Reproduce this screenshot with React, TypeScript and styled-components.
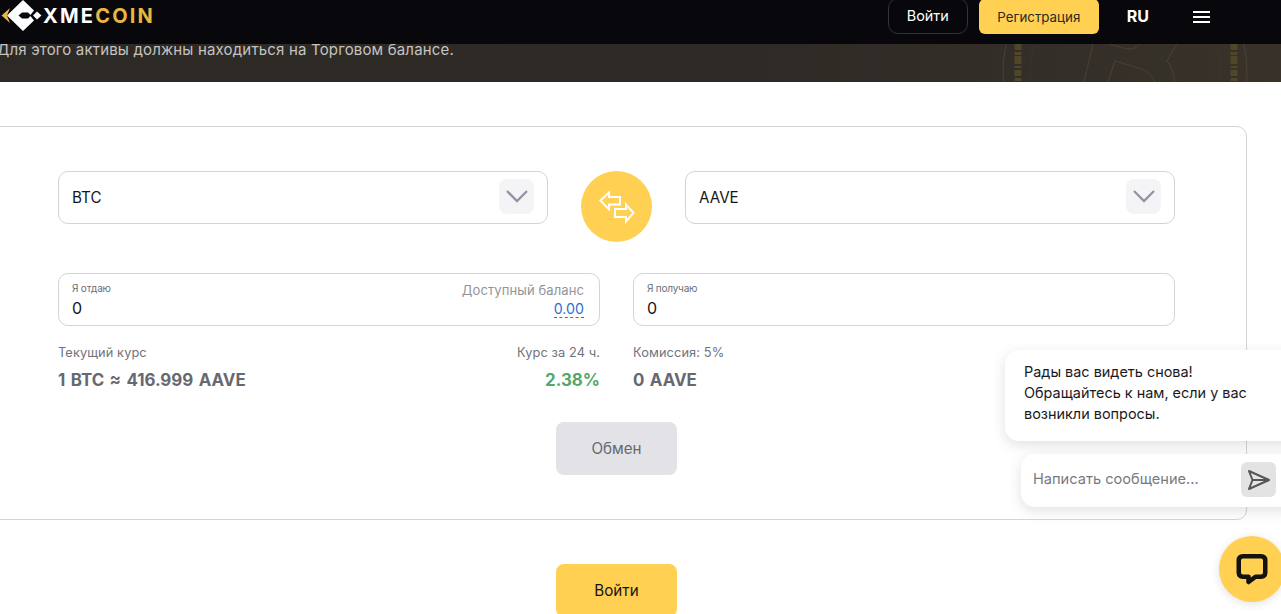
import React from "react";
import styled, { createGlobalStyle } from "styled-components";

const GlobalStyle = createGlobalStyle`
  html, body {
    margin: 0;
    padding: 0;
    background: #fff;
    overflow: hidden;
  }
  body {
    font-family: Inter, "Noto Sans", sans-serif;
    color: #14151a;
  }
  * {
    box-sizing: border-box;
  }
`;

const App: React.FC = () => {
  return (
    <>
      <GlobalStyle />
      <Page>
        <Header>
          <LogoLink>
            <svg width="43" height="32" viewBox="0 0 43 32">
              <path d="M1.5 15.5 L10 8 L7 15.5 L10 23 Z" fill="#e9b63f" />
              <path d="M7 15.5 L23 0 L34 10.5 L30 15.5 L34 20.5 L23 31 Z" fill="#fff" />
              <path d="M33 15.5 L37 11.5 L41.5 15.5 L37 19.5 Z" fill="#fff" />
              <path d="M18.5 15.5 L22 12.5 L28 12.5 L31 15.5 L28 18.5 L22 18.5 Z" fill="#07070c" />
            </svg>
            <LogoText>
              XME<LogoAccent>COIN</LogoAccent>
            </LogoText>
          </LogoLink>
          <HeaderActions>
            <LoginLink>Войти</LoginLink>
            <RegisterLink>Регистрация</RegisterLink>
            <Lang>RU</Lang>
            <Burger>
              <span />
              <span />
              <span />
            </Burger>
          </HeaderActions>
        </Header>

        <Hero>
          <HeroText>Для этого активы должны находиться на Торговом балансе.</HeroText>
          <HeroCoin width="300" height="38" viewBox="0 0 300 38">
            <g fill="none" stroke="#4a4231" strokeWidth="1">
              <circle cx="140" cy="28" r="122" />
              <circle cx="140" cy="28" r="95" strokeDasharray="1 2" />
              <path d="M108 0 L99 38 M130 17 L123 38 M130 17 L157 25 Q166 29 170 38 M182 17 L192 0 M182 17 Q188 24 190 38 M125 0 L142 5 Q150 6 155 0" />
            </g>
            <g stroke="#504729" strokeWidth="7" strokeDasharray="6 2 3 1 8 2 2 2">
              <path d="M33 0 V38" />
              <path d="M249 0 V38" />
            </g>
          </HeroCoin>
        </Hero>

        <Main>
          <ExchangeCard>
            <SelectRow>
              <SelectBox>
                <span>BTC</span>
                <Chevron>
                  <svg width="24" height="14" viewBox="0 0 24 14">
                    <path d="M2 2 L12 12 L22 2" fill="none" stroke="#9294a5" strokeWidth="2.4" />
                  </svg>
                </Chevron>
              </SelectBox>
              <SwapButton>
                <svg width="36" height="36" viewBox="0 0 36 36">
                  <g fill="none" stroke="#fff" strokeWidth="2" strokeLinejoin="miter">
                    <path d="M1.5 11.5 L10 3.5 V8 H21 V15.5 H10 V20.5 Z" />
                    <path d="M34.5 23.8 L27 15.5 V20 H16 V28 H27 V32.5 Z" />
                  </g>
                </svg>
              </SwapButton>
              <SelectBox>
                <span>AAVE</span>
                <Chevron>
                  <svg width="24" height="14" viewBox="0 0 24 14">
                    <path d="M2 2 L12 12 L22 2" fill="none" stroke="#9294a5" strokeWidth="2.4" />
                  </svg>
                </Chevron>
              </SelectBox>
            </SelectRow>

            <AmountRow>
              <AmountColumn>
                <AmountBox>
                  <div>
                    <AmountLabel>Я отдаю</AmountLabel>
                    <AmountValue>0</AmountValue>
                  </div>
                  <Balance>
                    <BalanceLabel>Доступный баланс</BalanceLabel>
                    <BalanceValue>0.00</BalanceValue>
                  </Balance>
                </AmountBox>
                <Stats>
                  <div>
                    <StatLabel>Текущий курс</StatLabel>
                    <StatValue>1 BTC ≈ 416.999 AAVE</StatValue>
                  </div>
                  <StatRight>
                    <StatLabel>Курс за 24 ч.</StatLabel>
                    <StatValue $positive>2.38%</StatValue>
                  </StatRight>
                </Stats>
              </AmountColumn>
              <AmountColumn>
                <AmountBox>
                  <div>
                    <AmountLabel>Я получаю</AmountLabel>
                    <AmountValue>0</AmountValue>
                  </div>
                </AmountBox>
                <Stats>
                  <div>
                    <StatLabel>Комиссия: 5%</StatLabel>
                    <StatValue>0 AAVE</StatValue>
                  </div>
                </Stats>
              </AmountColumn>
            </AmountRow>

            <ExchangeButton>Обмен</ExchangeButton>
          </ExchangeCard>

          <SubmitButton>Войти</SubmitButton>
        </Main>

        <ChatWidget>
          <ChatBubble>
            Рады вас видеть снова!
            <br />
            Обращайтесь к нам, если у вас
            <br />
            возникли вопросы.
          </ChatBubble>
          <ChatInput>
            <span>Написать сообщение...</span>
            <ChatSend>
              <svg width="24" height="22" viewBox="0 0 24 22">
                <path d="M2 2 L22 11 L2 20 L5.5 11 Z M5.5 11 H22" fill="none" stroke="#555" strokeWidth="2" strokeLinejoin="round" />
              </svg>
            </ChatSend>
          </ChatInput>
          <ChatLauncher>
            <svg width="34" height="34" viewBox="0 0 34 34">
              <path
                d="M8 4.25 H26 Q30.25 4.25 30.25 8.5 V20.5 Q30.25 24.75 26 24.75 H20.5 L13.5 30 V24.75 H8 Q3.75 24.75 3.75 20.5 V8.5 Q3.75 4.25 8 4.25 Z"
                fill="none"
                stroke="#14120d"
                strokeWidth="4.5"
                strokeLinejoin="round"
              />
            </svg>
          </ChatLauncher>
        </ChatWidget>
      </Page>
    </>
  );
};

export default App;

const Page = styled.div`
  position: relative;
  width: 1281px;
  height: 614px;
  overflow: hidden;
`;

const Header = styled.header`
  height: 44px;
  background: #07070c;
  display: flex;
  align-items: flex-start;
  justify-content: space-between;
`;

const LogoLink = styled.div`
  display: flex;
  align-items: center;
  height: 31px;
`;

const LogoText = styled.div`
  font-size: 20px;
  font-weight: 700;
  letter-spacing: 2.2px;
  color: #fff;
  line-height: 1;
  margin-top: 1px;
`;

const LogoAccent = styled.span`
  color: #e9b63f;
`;

const HeaderActions = styled.div`
  display: flex;
  align-items: center;
  margin-top: -2px;
  padding-right: 71px;
`;

const LoginLink = styled.div`
  width: 80px;
  height: 36px;
  border: 1px solid #33343a;
  border-radius: 10px;
  color: #fff;
  font-size: 14.4px;
  padding-bottom: 1px;
  display: flex;
  align-items: center;
  justify-content: center;
`;

const RegisterLink = styled.div`
  width: 120px;
  height: 35px;
  margin-left: 11px;
  border-radius: 6px;
  background: #ffd052;
  color: #2c2a22;
  font-size: 13.3px;
  display: flex;
  align-items: center;
  justify-content: center;
  padding-top: 2px;
`;

const Lang = styled.div`
  margin-left: 28px;
  color: #fff;
  font-size: 16px;
  font-weight: 700;
`;

const Burger = styled.div`
  margin-left: 44px;
  width: 17px;
  display: flex;
  flex-direction: column;
  gap: 3px;
  margin-top: 1px;

  span {
    display: block;
    height: 2px;
    background: #fff;
  }
`;

const Hero = styled.section`
  position: relative;
  height: 38px;
  background: linear-gradient(90deg, #2d2925 0%, #2e2a25 60%, #38322a 100%);
  overflow: hidden;
`;

const HeroText = styled.p`
  position: relative;
  margin: 0 0 0 -3px;
  font-size: 15px;
  line-height: 11px;
  letter-spacing: 0.17px;
  color: #c5c3c1;
  white-space: nowrap;
`;

const HeroCoin = styled.svg`
  position: absolute;
  left: 985px;
  top: 0;
`;

const Main = styled.main`
  display: flex;
  flex-direction: column;
  align-items: center;
  padding-top: 44px;
  margin-left: -14px;
  width: 1261px;
`;

const ExchangeCard = styled.div`
  width: 100%;
  height: 394px;
  border: 1px solid #d3d3d8;
  border-radius: 10px;
  padding: 44px 71px 0;
  display: flex;
  flex-direction: column;
`;

const SelectRow = styled.div`
  display: flex;
  justify-content: space-between;
  align-items: flex-start;
`;

const SelectBox = styled.div`
  width: 490px;
  height: 53px;
  border: 1px solid #d3d3d8;
  border-radius: 10px;
  display: flex;
  align-items: center;
  justify-content: space-between;
  padding: 0 13px 1px;
  font-size: 15.2px;
  color: #14151a;
`;

const Chevron = styled.div`
  width: 35px;
  height: 35px;
  border-radius: 8px;
  background: #f4f4f7;
  display: flex;
  align-items: center;
  justify-content: center;
  margin-top: -2px;
`;

const SwapButton = styled.div`
  width: 71px;
  height: 71px;
  border-radius: 50%;
  background: #ffd052;
  display: flex;
  align-items: center;
  justify-content: center;
`;

const AmountRow = styled.div`
  display: flex;
  justify-content: space-between;
  margin-top: 31px;
`;

const AmountColumn = styled.div`
  width: 542px;
`;

const AmountBox = styled.div`
  height: 53px;
  border: 1px solid #d3d3d8;
  border-radius: 10px;
  padding: 8px 15px 0 13px;
  display: flex;
  justify-content: space-between;
`;

const AmountLabel = styled.div`
  font-size: 10px;
  line-height: 13px;
  letter-spacing: -0.2px;
  color: #6c6e76;
`;

const AmountValue = styled.div`
  font-size: 16px;
  line-height: 20px;
  margin-top: 3px;
  color: #14151a;
`;

const Balance = styled.div`
  display: flex;
  flex-direction: column;
  align-items: flex-end;
`;

const BalanceLabel = styled.div`
  font-size: 13px;
  line-height: 17px;
  letter-spacing: 0.1px;
  color: #92949c;
`;

const BalanceValue = styled.div`
  font-size: 14.2px;
  line-height: 17px;
  margin-top: 1px;
  color: #2f6fd0;
  border-bottom: 1px dashed #2f6fd0;
`;

const Stats = styled.div`
  display: flex;
  justify-content: space-between;
  margin-top: 19px;
`;

const StatRight = styled.div`
  text-align: right;
`;

const StatLabel = styled.div`
  font-size: 12.8px;
  line-height: 16px;
  letter-spacing: 0.1px;
  color: #71737b;
`;

const StatValue = styled.div<{ $positive?: boolean }>`
  margin-top: 8px;
  font-size: 16.9px;
  line-height: 22px;
  font-weight: 700;
  word-spacing: 1.4px;
  color: ${(p) => (p.$positive ? "#55a868" : "#666970")};
`;

const ExchangeButton = styled.div`
  align-self: center;
  width: 121px;
  height: 53px;
  margin-top: 31px;
  border-radius: 8px;
  background: #e2e2e7;
  color: #666970;
  font-size: 15.2px;
  padding-bottom: 1px;
  display: flex;
  align-items: center;
  justify-content: center;
`;

const SubmitButton = styled.div`
  flex: none;
  width: 121px;
  height: 53px;
  margin-top: 44px;
  margin-left: 0;
  border-radius: 8px;
  background: #ffd052;
  color: #14151a;
  font-size: 15.2px;
  padding-bottom: 1px;
  display: flex;
  align-items: center;
  justify-content: center;
`;

const ChatWidget = styled.aside`
  position: absolute;
  left: 1005px;
  top: 350px;
  width: 300px;
  display: flex;
  flex-direction: column;
  align-items: flex-start;
`;

const ChatBubble = styled.div`
  width: 300px;
  height: 91px;
  border-radius: 14px;
  background: #fff;
  box-shadow: 0 4px 14px rgba(0, 0, 0, 0.12);
  padding: 11px 19px;
  font-size: 14.45px;
  line-height: 21px;
  color: #1a1a1e;
`;

const ChatInput = styled.div`
  width: 280px;
  height: 53px;
  margin: 13px 0 0 16px;
  border-radius: 14px;
  background: #fff;
  box-shadow: 0 4px 14px rgba(0, 0, 0, 0.12);
  padding: 0 12px 4px;
  display: flex;
  align-items: center;
  font-size: 14.6px;
  color: #7a7a7f;
  position: relative;
`;

const ChatSend = styled.div`
  position: absolute;
  left: 220px;
  top: 8px;
  width: 35px;
  height: 35px;
  border-radius: 6px;
  background: #e3e3e3;
  display: flex;
  align-items: center;
  justify-content: center;
`;

const ChatLauncher = styled.div`
  width: 66px;
  height: 66px;
  margin: 29px 0 0 214px;
  border-radius: 50%;
  background: #ffd052;
  box-shadow: 0 2px 10px rgba(0, 0, 0, 0.12);
  display: flex;
  align-items: center;
  justify-content: center;
`;
